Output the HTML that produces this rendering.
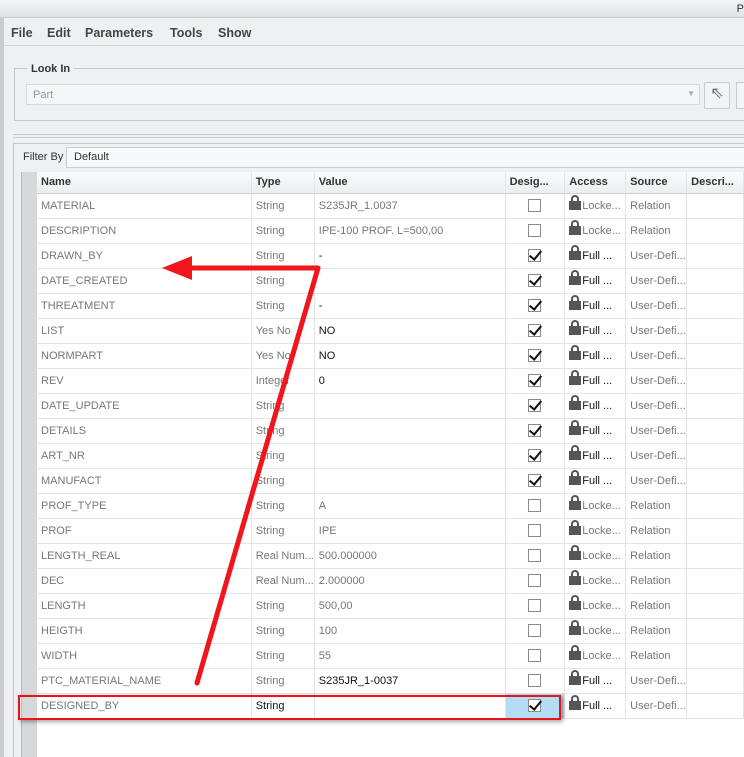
<!DOCTYPE html>
<html><head><meta charset="utf-8"><style>
*{margin:0;padding:0;box-sizing:border-box}
body{width:744px;height:757px;overflow:hidden;background:#eef0f2;font-family:"Liberation Sans",sans-serif;font-size:11px;position:relative;color:#555}
.abs{position:absolute}
.title{left:0;top:0;width:744px;height:18px;background:linear-gradient(#f4f5f6,#e0e2e4);border-bottom:1px solid #c8cacc}
.menu{left:0;top:19px;width:744px;height:27px;border-bottom:1px solid #d0d2d4;font-size:12.5px;color:#444;font-weight:bold}
.menu span{position:absolute;top:7px}
table{border-collapse:collapse;position:absolute;left:37px;top:172px;table-layout:fixed;background:#fff}
td,th{height:25px;border-right:1px solid #e2e4e6;border-bottom:1px solid #e2e4e6;padding-left:4px;white-space:nowrap;overflow:hidden;text-align:left;font-weight:normal;color:#777;vertical-align:middle}
th{height:21px;background:linear-gradient(#fafbfc,#eceef0);color:#333;font-weight:bold;font-size:11px;border-bottom:1px solid #cfd1d3}
td.b{color:#111}
.cb{display:block;margin:0 auto;width:13px;height:13px;border:1px solid #8a8a8a;background:#fff;position:relative}
.ck::after{content:"";position:absolute;left:3px;top:-2px;width:5px;height:10px;border:solid #111;border-width:0 2.5px 2.5px 0;transform:rotate(40deg)}
td.c{padding:0}
.lk{display:inline-block;width:12px;height:9px;background:#555;position:relative;vertical-align:-1px;margin-right:1px}
.lk::before{content:"";position:absolute;left:2px;top:-6px;width:4px;height:6px;border:2px solid #555;border-bottom:0;border-radius:4px 4px 0 0}
</style></head><body>
<div class="abs" style="left:0;top:0;width:4px;height:757px;background:#c9cbcd"></div>
<div class="abs title"><span class="abs" style="right:0;top:3px;color:#333">P</span></div>
<div class="abs menu"><span style="left:11px">File</span><span style="left:47px">Edit</span><span style="left:85px">Parameters</span><span style="left:170px">Tools</span><span style="left:218px">Show</span></div>
<div class="abs" style="left:14px;top:68px;width:740px;height:53px;border:1px solid #c4c6c8"></div>
<div class="abs" style="left:27px;top:63px;background:#eef0f2;padding:0 4px;font-weight:bold;color:#333;font-size:11px">Look In</div>
<div class="abs" style="left:26px;top:84px;width:674px;height:21px;border:1px solid #d6d8da;background:#f5f6f7;color:#999;padding:4px 6px">Part<span class="abs" style="right:4px;top:4px;font-size:8px;color:#aaa">▼</span></div>
<div class="abs" style="left:704px;top:82px;width:26px;height:27px;border:1px solid #ccc;border-radius:2px;background:#f3f4f5;color:#666;font-size:16px;text-align:center">⇖</div>
<div class="abs" style="left:736px;top:82px;width:10px;height:27px;border:1px solid #ccc;background:#f3f4f5"></div>
<div class="abs" style="left:13px;top:134px;width:731px;height:4px;border-top:1px solid #c8cacc;border-bottom:1px solid #c8cacc"></div>
<div class="abs" style="left:13px;top:143px;width:731px;height:614px;border:1px solid #c4c6c8;border-right:0;border-bottom:0"></div>
<div class="abs" style="left:23px;top:151px;color:#333">Filter By</div>
<div class="abs" style="left:66px;top:147px;width:680px;height:21px;border:1px solid #ccc;background:#f7f8f9;padding:3px 7px;color:#333">Default</div>
<div class="abs" style="left:21px;top:172px;width:16px;height:585px;background:#d6d8da;border-left:1px solid #b8babc"></div>
<div class="abs" style="left:37px;top:718px;width:707px;height:39px;background:#fff"></div>
<table>
<colgroup><col style="width:216px"><col style="width:60px"><col style="width:192px"><col style="width:60px"><col style="width:61px"><col style="width:61px"><col style="width:57px"></colgroup>
<tr><th>Name</th><th>Type</th><th>Value</th><th>Desig...</th><th>Access</th><th>Source</th><th>Descri...</th></tr>
<tr><td>MATERIAL</td><td>String</td><td>S235JR_1.0037</td><td class="c"><i class="cb"></i></td><td><i class="lk"></i>Locke...</td><td>Relation</td><td></td></tr>
<tr><td>DESCRIPTION</td><td>String</td><td>IPE-100 PROF. L=500,00</td><td class="c"><i class="cb"></i></td><td><i class="lk"></i>Locke...</td><td>Relation</td><td></td></tr>
<tr><td>DRAWN_BY</td><td>String</td><td class="b">-</td><td class="c"><i class="cb ck"></i></td><td class="b"><i class="lk"></i>Full ...</td><td>User-Defi...</td><td></td></tr>
<tr><td>DATE_CREATED</td><td>String</td><td class="b"></td><td class="c"><i class="cb ck"></i></td><td class="b"><i class="lk"></i>Full ...</td><td>User-Defi...</td><td></td></tr>
<tr><td>THREATMENT</td><td>String</td><td class="b">-</td><td class="c"><i class="cb ck"></i></td><td class="b"><i class="lk"></i>Full ...</td><td>User-Defi...</td><td></td></tr>
<tr><td>LIST</td><td>Yes No</td><td class="b">NO</td><td class="c"><i class="cb ck"></i></td><td class="b"><i class="lk"></i>Full ...</td><td>User-Defi...</td><td></td></tr>
<tr><td>NORMPART</td><td>Yes No</td><td class="b">NO</td><td class="c"><i class="cb ck"></i></td><td class="b"><i class="lk"></i>Full ...</td><td>User-Defi...</td><td></td></tr>
<tr><td>REV</td><td>Integer</td><td class="b">0</td><td class="c"><i class="cb ck"></i></td><td class="b"><i class="lk"></i>Full ...</td><td>User-Defi...</td><td></td></tr>
<tr><td>DATE_UPDATE</td><td>String</td><td></td><td class="c"><i class="cb ck"></i></td><td class="b"><i class="lk"></i>Full ...</td><td>User-Defi...</td><td></td></tr>
<tr><td>DETAILS</td><td>String</td><td></td><td class="c"><i class="cb ck"></i></td><td class="b"><i class="lk"></i>Full ...</td><td>User-Defi...</td><td></td></tr>
<tr><td>ART_NR</td><td>String</td><td></td><td class="c"><i class="cb ck"></i></td><td class="b"><i class="lk"></i>Full ...</td><td>User-Defi...</td><td></td></tr>
<tr><td>MANUFACT</td><td>String</td><td></td><td class="c"><i class="cb ck"></i></td><td class="b"><i class="lk"></i>Full ...</td><td>User-Defi...</td><td></td></tr>
<tr><td>PROF_TYPE</td><td>String</td><td>A</td><td class="c"><i class="cb"></i></td><td><i class="lk"></i>Locke...</td><td>Relation</td><td></td></tr>
<tr><td>PROF</td><td>String</td><td>IPE</td><td class="c"><i class="cb"></i></td><td><i class="lk"></i>Locke...</td><td>Relation</td><td></td></tr>
<tr><td>LENGTH_REAL</td><td>Real Num...</td><td>500.000000</td><td class="c"><i class="cb"></i></td><td><i class="lk"></i>Locke...</td><td>Relation</td><td></td></tr>
<tr><td>DEC</td><td>Real Num...</td><td>2.000000</td><td class="c"><i class="cb"></i></td><td><i class="lk"></i>Locke...</td><td>Relation</td><td></td></tr>
<tr><td>LENGTH</td><td>String</td><td>500,00</td><td class="c"><i class="cb"></i></td><td><i class="lk"></i>Locke...</td><td>Relation</td><td></td></tr>
<tr><td>HEIGTH</td><td>String</td><td>100</td><td class="c"><i class="cb"></i></td><td><i class="lk"></i>Locke...</td><td>Relation</td><td></td></tr>
<tr><td>WIDTH</td><td>String</td><td>55</td><td class="c"><i class="cb"></i></td><td><i class="lk"></i>Locke...</td><td>Relation</td><td></td></tr>
<tr><td>PTC_MATERIAL_NAME</td><td>String</td><td class="b">S235JR_1-0037</td><td class="c"><i class="cb"></i></td><td class="b"><i class="lk"></i>Full ...</td><td>User-Defi...</td><td></td></tr>
<tr><td>DESIGNED_BY</td><td class="b">String</td><td></td><td class="c" style="background:#b3dcf5"><i class="cb ck"></i></td><td class="b"><i class="lk"></i>Full ...</td><td>User-Defi...</td><td></td></tr>
</table>
<div class="abs" style="left:18px;top:695px;width:543px;height:25px;border:2px solid #e8141a;box-shadow:2px 2px 4px rgba(0,0,0,.35)"></div>
<svg class="abs" style="left:0;top:0" width="744" height="757">
<g fill="none" stroke="#f0161c" stroke-width="5" stroke-linecap="round" stroke-linejoin="round">
<polyline points="197,683 318,268 190,268"/>
</g>
<polygon points="162,268 192,256 192,280" fill="#f0161c"/>
</svg>
</body></html>
